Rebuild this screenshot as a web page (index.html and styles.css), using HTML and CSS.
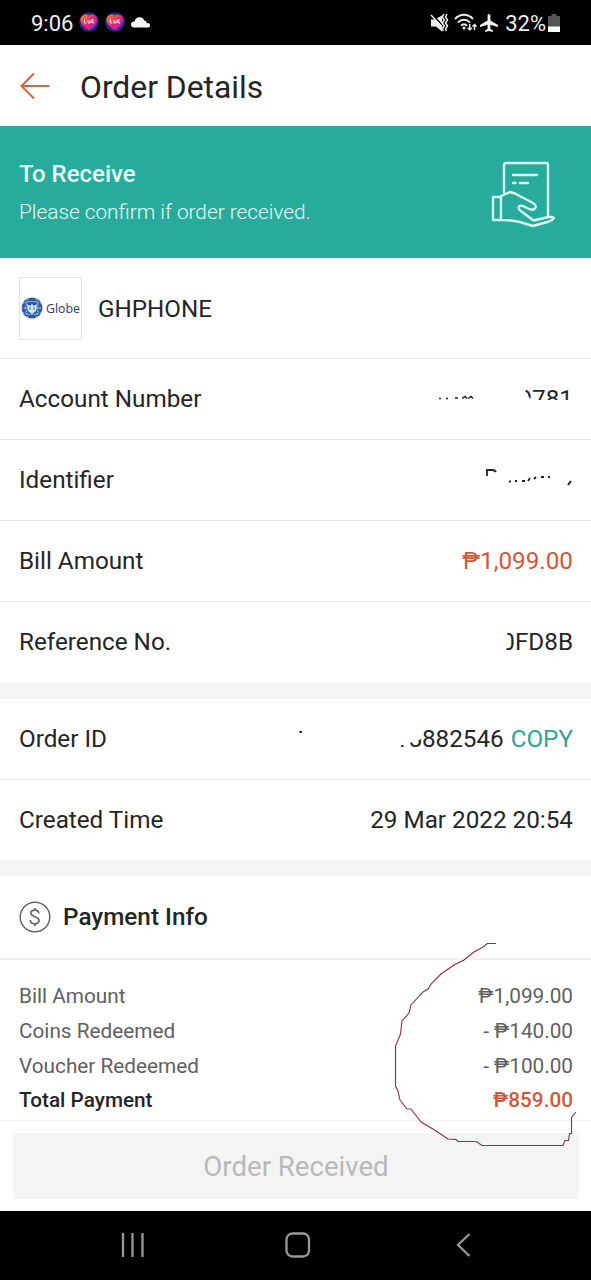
FILE: index.html
```
<!DOCTYPE html>
<html lang="en">
<head>
<meta charset="utf-8">
<title>Order Details</title>
<link rel="stylesheet" href="styles.css">
</head>
<body>
<div class="screen">
  <div class="status">
    <span class="time">9:06</span>
    <svg class="app-icon" viewBox="0 0 20 20"><defs><linearGradient id="heart" x1="0" y1="0" x2="1" y2="1"><stop offset="0" stop-color="#ff8a1c"/><stop offset=".5" stop-color="#e02878"/><stop offset="1" stop-color="#a01ac4"/></linearGradient></defs><circle cx="10" cy="10" r="9.8" fill="#252a8c"/><path d="M10 3.500C7 1 1 3 1.500 9c1.200 4 5 7.500 8.500 9.300 3.500-1.800 7.300-5.300 8.500-9.300C19 3 13 1 10 3.500z" fill="url(#heart)"/><path d="M5.500 7v4h2m1.500-3v3h2V8m1 3 1-4m1.300 0-.8 4h1.500" fill="none" stroke="#ffd9dc" stroke-width="1"/></svg>
    <svg class="app-icon" viewBox="0 0 20 20"><circle cx="10" cy="10" r="9.8" fill="#252a8c"/><path d="M10 3.500C7 1 1 3 1.500 9c1.200 4 5 7.500 8.500 9.300 3.500-1.800 7.300-5.300 8.500-9.300C19 3 13 1 10 3.500z" fill="url(#heart)"/><path d="M5.500 7v4h2m1.500-3v3h2V8m1 3 1-4m1.300 0-.8 4h1.500" fill="none" stroke="#ffd9dc" stroke-width="1"/></svg>
    <svg class="cloud" viewBox="0 0 19 12"><path d="M3 11.500a3 3 0 0 1 0-6h.6a5 5 0 0 1 9.600-1 2.800 2.800 0 0 1 2.500 3 2.100 2.100 0 0 1 2.300 4z" fill="#f4f4f4"/></svg>
    <div class="system">
      <svg width="18" height="20" viewBox="0 0 18 20"><path d="M1 6.500h3.500l7.500-4v16L6 13.500H1z" fill="#eee"/><path d="M2 1l11 12" stroke="#000" stroke-width="1.500"/><path d="M1 2l11 12" stroke="#eee" stroke-width="1.500"/><path d="M13.800 1l-1.500 3 2 3-2 3 2 3-2 3 1 2M17 1l-1.500 3 2 3-2 3 2 3-2 3 1 2" fill="none" stroke="#eee" stroke-width="1.500"/></svg>
      <svg class="wifi" width="23" height="19" viewBox="0 0 23 19"><path d="M1 6C6 .4 14 .4 19 6M4 9.500c3.500-3.700 8.500-3.700 12 0M7 12.700c1.800-1.800 4.200-1.800 6 0" fill="none" stroke="#eee" stroke-width="2"/><circle cx="10" cy="15" r="1.500" fill="#eee"/><path d="M15.700 11v6m-2-2.200 2 2.200 2-2.200M20.500 17v-5.500m-2 2 2-2 2 2" fill="none" stroke="#eee" stroke-width="1.500"/></svg>
      <svg class="plane" width="18" height="18" viewBox="0 0 18 18"><path d="M9 0c1 0 1.400.9 1.400 2v4.500L18 11v2l-7.600-2.300v4L13 16.800V18l-4-1-4 1v-1.200l2.600-2.100v-4L0 13v-2l7.600-4.500V2C7.600.9 8 0 9 0z" fill="#f4f4f4"/></svg>
      <span class="battery-text">32%</span>
      <svg width="12" height="18" viewBox="0 0 12 18"><path d="M3.500 0h5v2H12v16H0V2h3.500z" fill="#555"/><path d="M0 12.500h12V18H0z" fill="#fff"/></svg>
    </div>
  </div>
  <header class="header">
    <svg width="30" height="28" viewBox="0 0 30 28"><path d="M29.500 14H1M14 1.500 1.500 14 14 26.500" fill="none" stroke="#d8613f" stroke-width="2"/></svg>
    <h1 class="title">Order Details</h1>
  </header>
  <section class="banner">
    <div>
      <div class="banner-title">To Receive</div>
      <div class="banner-text">Please confirm if order received.</div>
    </div>
    <svg width="64" height="66" viewBox="0 0 64 66"><g fill="none" stroke="#d9fff5" stroke-width="2.400" stroke-linejoin="round" stroke-linecap="round"><path d="M13 31V4q0-2 2-2h40q2 0 2 2v52"/><path d="M22 14h24M22 22h2.500M29 22h8"/><path d="M2 36h8v23H2zM10 35l9-4 5 1.500L42 42q4 2.500 2 5.500-2 2.500-7 0l-5-2.500q-4-1-4.500 1.500 0 2 3 4l12 9 15-3.500q6-.5 5 1.500-1 1.500-4.500 3L42 65q-7-2-13-4-7-2-19-2"/></g></svg>
  </section>
  <section class="shop">
    <div class="logo"><svg width="22" height="22" viewBox="0 0 22 22"><circle cx="11" cy="11" r="10.500" fill="#315ca4"/><path d="M1.500 7q9-5 19 0M1.500 15q9 5 19 0M7 1.500Q3 11 7 20.500M15 1.500Q19 11 15 20.500M0 11h22" fill="none" stroke="#b5d5ec" stroke-width="1" stroke-dasharray="2 1"/><path d="M6 7l3 2 2-2 2 2 3-2-1 7-4 3-4-3z" fill="#d2e8f4"/><path d="M9 10v3m4-3v3" stroke="#3b69aa"/></svg><span>Globe</span></div>
    <span class="shop-name">GHPHONE</span>
  </section>
  <section class="rows">
    <div class="row"><span>Account Number</span><span class="value"><svg class="trace account-trace" width="38" height="8" viewBox="0 0 38 8"><path d="M2 6.500h2M9 6.500h2M18 6h3M25 6.500l3-2 2 2M31 6.500l3-2 2 2" fill="none" stroke="#222" stroke-width="1.500"/></svg><span class="clip-account">9781</span></span></div>
    <div class="row"><span>Identifier</span><span class="value"><svg class="trace identifier-trace" width="90" height="20" viewBox="0 0 90 20"><path d="M4 9V3h5q3 0 4 2" fill="none" stroke="#222" stroke-width="1.800"/><path d="M26 14.500h2M32 14h2M39 14h3M45 14l2-3M51 12l2-2M58 10h3M65 10h2" stroke="#222" stroke-width="1.800"/><path d="M85 18l3-4" stroke="#222" stroke-width="2"/></svg></span></div>
    <div class="row"><span>Bill Amount</span><span class="value price">₱1,099.00</span></div>
    <div class="row"><span>Reference No.</span><span class="value clip-reference">0FD8B</span></div>
  </section>
  <section class="rows order">
    <div class="row"><span>Order ID</span><span class="value"><svg class="trace id-trace" width="4" height="4"><path d="M1 0h3v2H2z" fill="#222"/></svg><span class="clip-id">15882546</span> <span class="copy">COPY</span></span></div>
    <div class="row"><span>Created Time</span><span class="value">29 Mar 2022 20:54</span></div>
  </section>
  <section class="payment">
    <div class="payment-head">
      <svg width="32" height="32" viewBox="0 0 32 32"><circle cx="16" cy="16" r="14.800" fill="none" stroke="#666" stroke-width="1.500"/><path d="M19.800 12.500c0-4.500-8-4.500-8-.5 0 4.500 8.300 3 8.300 7.500 0 4.500-8.800 4.500-8.800-.5M16 7v2.500m0 13V25" fill="none" stroke="#666" stroke-width="1.700"/></svg>
      <h2 class="payment-title">Payment Info</h2>
    </div>
    <div class="summary">
      <div class="line"><span>Bill Amount</span><span>₱1,099.00</span></div>
      <div class="line"><span>Coins Redeemed</span><span>- ₱140.00</span></div>
      <div class="line"><span>Voucher Redeemed</span><span>- ₱100.00</span></div>
      <div class="line total"><span>Total Payment</span><span class="price">₱859.00</span></div>
    </div>
    <svg class="scribble" width="190" height="210" viewBox="0 0 190 210"><path d="M102 2.500H93.500L89 6 80 11 70 19 60 24 47 33 37 43 34 48 29 51 17 64 15 72 8 80 6.500 93 1.500 105V145L4 150 6 159 13 168H17L27 181 39 188 54 198 62 198.500 64 200.500H80L83 201 88 204.500H169L171 199.500H174.500L175.500 192.500H177.500V176.500L182 171" fill="none" stroke="#8f3038" stroke-width="1.100"/></svg>
  </section>
  <div class="action"><div class="button">Order Received</div></div>
  <nav class="nav">
    <svg width="24" height="24" viewBox="0 0 24 24"><path d="M2 0v24M11.500 0v24M21.500 0v24" stroke="#999" stroke-width="2.300"/></svg>
    <svg class="home" width="26" height="26" viewBox="0 0 26 26"><rect x="1.500" y="1.500" width="22.500" height="23" rx="6" fill="none" stroke="#999" stroke-width="2.300"/></svg>
    <svg width="16" height="24" viewBox="0 0 16 24"><path d="M13.500 1 2 12l11.500 11" fill="none" stroke="#999" stroke-width="2.300"/></svg>
  </nav>
</div>
</body>
</html>
```

FILE: styles.css
```
* { box-sizing: border-box; }
body { margin: 0; background: #fff; font-family: Roboto, "Noto Sans", sans-serif; color: #252525; }
svg { display: block; flex: none; overflow: visible; }
h1, h2 { margin: 0; }
.screen { width: 591px; height: 1280px; display: flex; flex-direction: column; overflow: hidden; }
.screen > * { flex: none; }
.status { height: 45px; background: #000; color: #eee; display: flex; align-items: center; padding: 0 31px; }
.time { font-size: 22px; width: 48px; white-space: nowrap; padding-top: 1px; }
.app-icon { width: 20px; height: 20px; margin-right: 6px; margin-bottom: 2px; }
.cloud { width: 19px; height: 12px; margin-bottom: 2px; }
.system { margin-left: auto; display: flex; align-items: center; }
.wifi { margin-left: 6px; }
.plane { margin-left: 3px; }
.battery-text { font-size: 22px; margin: 1px 2px 0 7px; }
.header { height: 81px; display: flex; align-items: center; padding-left: 20px; gap: 30px; }
.title { font-size: 31.800px; font-weight: 400; line-height: 40px; padding-top: 3px; }
.banner { height: 132px; background: #27ab9c; color: #e5fff9; display: flex; align-items: center; justify-content: space-between; padding: 4px 36px 0 19px; }
.banner-title { font-size: 24px; font-weight: 500; line-height: 30px; }
.banner-text { font-size: 20.800px; font-weight: 300; line-height: 28px; margin: 9px 0 3px; }
.shop { height: 101px; display: flex; align-items: center; padding-left: 19px; gap: 16px; border-bottom: 1px solid #e8e8e8; }
.logo { width: 63px; height: 63px; border: 1px solid #e3e3e3; display: flex; align-items: center; gap: 3px; padding-left: 1px; font: 500 12.300px "Open Sans", sans-serif; color: #343657; }
.shop-name { font-size: 24.200px; padding-top: 1px; }
.rows { font-size: 24.250px; border-bottom: 17px solid #f4f4f4; }
.row { height: 81px; display: flex; align-items: center; justify-content: space-between; padding: 0 18px 0 19px; border-bottom: 1px solid #e8e8e8; }
.row:last-child { height: 80px; border-bottom: 0; }
.value { display: flex; align-items: center; white-space: pre; }
.price { color: #d3573b; }
.copy { color: #33a294; margin-left: 7px; }
.account-trace { margin: 0 43px 6px 0; }
.identifier-trace { margin-bottom: 6px; }
.clip-account { clip-path: polygon(7px 0, 100% 0, 100% 15px, 15px 15px, 12px 14px, 7px 8px); }
.clip-reference { clip-path: polygon(6px 0, 100% 0, 100% 100%, 3px 100%, 6px 18px); }
.clip-id { clip-path: polygon(31px 0, 100% 0, 100% 100%, 0 100%, 0 20px, 13px 20px, 13px 15px, 25px 15px, 28px 9px); }
.id-trace { margin: 0 93px 12px 0; }
.order { border-bottom-width: 16px; }
.payment { height: 245px; position: relative; border-bottom: 1px solid #f3f3f3; }
.payment-head { height: 84px; display: flex; align-items: center; gap: 12px; padding: 0 19px; border-bottom: 2px solid #f0f0f0; }
.payment-title { font-size: 24.300px; font-weight: 500; margin-bottom: 1px; }
.summary { padding: 19px 18px 0 19px; }
.line { display: flex; align-items: center; justify-content: space-between; height: 34.700px; font-size: 20.750px; color: #606060; }
.total { font-weight: 500; color: #252525; }
.total .price { color: #d3573b; }
.scribble { position: absolute; left: 394px; top: 65px; z-index: 1; }
.action { height: 90px; padding: 12px 12px 0 13px; }
.button { height: 66px; display: flex; align-items: center; justify-content: center; background: #f4f4f4; color: #b9b9b9; font-size: 27.600px; }
.nav { height: 69px; background: #000; display: flex; align-items: center; justify-content: space-between; padding: 0 119px 2px 121px; }
.home { margin-right: 6px; }
```
